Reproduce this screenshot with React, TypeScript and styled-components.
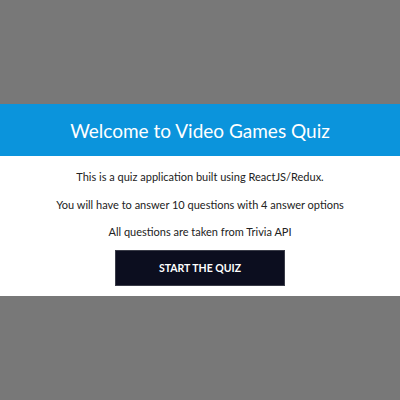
import styled, { createGlobalStyle } from "styled-components";

const GlobalStyle = createGlobalStyle`
    html, body {
        margin: 0;
        padding: 0;
        background-color: #787878;
        font-family: Lato, "Noto Sans", sans-serif;
    }
`;

const Page = styled.div`
    min-height: 100vh;
    display: flex;
    flex-direction: column;
    justify-content: center;
`;

const Card = styled.section`
    background-color: white;
`;

const Header = styled.header`
    height: 52px;
    background-color: #0b94dc;
    display: flex;
    justify-content: center;
    align-items: center;
`;

const Title = styled.h1`
    margin: 0;
    color: white;
    font-size: 19px;
    font-weight: 400;
`;

const Body = styled.div`
    padding: 7px 20px 10px;
    display: flex;
    flex-direction: column;
    align-items: center;
`;

const Text = styled.p`
    margin: 0;
    line-height: 27.5px;
    font-size: 11px;
    color: #222;
`;

const StartButton = styled.button`
    margin-top: 4px;
    width: 170px;
    height: 36px;
    background-color: #0c0e1f;
    border: 1px solid #3a3c48;
    color: white;
    font-family: inherit;
    font-size: 10.5px;
    font-weight: 700;
    text-transform: uppercase;
    cursor: pointer;
`;

function App() {
    return (
        <>
            <GlobalStyle />
            <Page>
                <Card>
                    <Header>
                        <Title>Welcome to Video Games Quiz</Title>
                    </Header>
                    <Body>
                        <Text>This is a quiz application built using ReactJS/Redux.</Text>
                        <Text>You will have to answer 10 questions with 4 answer options</Text>
                        <Text>All questions are taken from Trivia API</Text>
                        <StartButton>Start the quiz</StartButton>
                    </Body>
                </Card>
            </Page>
        </>
    );
}

export default App;
